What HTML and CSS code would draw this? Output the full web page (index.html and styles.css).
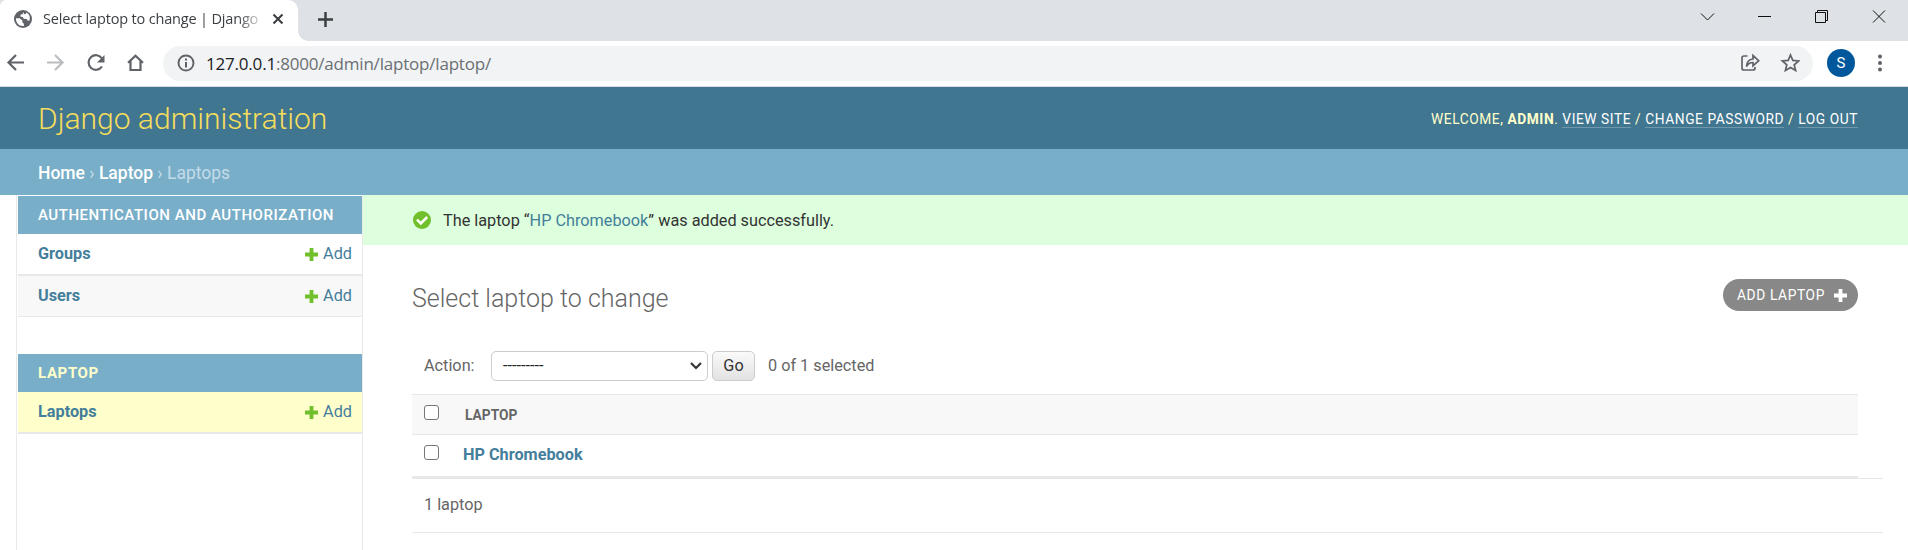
FILE: index.html
```
<!DOCTYPE html>
<html lang="en">
<head>
<meta charset="utf-8">
<title>Select laptop to change | Django site admin</title>
<link rel="stylesheet" href="styles.css">
</head>
<body>
<div class="tabstrip">
  <div class="tab">
    <svg class="globe" width="18" height="18" viewBox="0 0 18 18"><circle cx="9" cy="9" r="9" fill="#5f6368"/><path d="M2 8.200h3.700l2.700 2.200v2l1.500 1.300v2.200C5.200 16.500 1.600 12.800 2 8.200zM9 2.100l-.2 2.100-2.300.3v2.200l2.400.2.600 1.900 3.100.1 1 1.700 1.700.2c1.600-3.800-.3-7.300-3.300-8.300l-.2 1.500-1.400.3z" fill="#fff"/></svg>
    <span class="tab-title">Select laptop to change | Django</span>
    <svg class="tab-close" width="12" height="12" viewBox="0 0 12 12"><path d="M1.500 1.500l9 9m0-9l-9 9" stroke="#3c4043" stroke-width="2.100"/></svg>
  </div>
  <svg class="new-tab" width="24" height="41" viewBox="0 0 24 41"><path d="M12.500 12v15M5 19.500h15" stroke="#3c4043" stroke-width="2.500"/></svg>
  <svg class="window-buttons" width="208" height="41" viewBox="0 0 208 41" fill="none" stroke="#111" stroke-width="1"><path d="M1 13.500l6.500 6.500 6.500-6.500M58 16.500h13M115.500 12.500h10v10h-10zM117.500 12.500v-2h10v10h-2M173 10.500l12 12m0-12l-12 12"/></svg>
</div>
<div class="toolbar">
  <svg class="nav-icons" width="163" height="44" viewBox="0 0 163 44" fill="none" stroke="#5f6368" stroke-width="2.200">
    <path d="M24 21.500H9M16 14l-7.500 7.500L16 29"/>
    <path d="M47 21.500h15M55 14l7.500 7.500L55 29" stroke="#babcbe"/>
    <path d="M102 17.500A7.300 7.300 0 1 0 102 25.500"/><path d="M104.500 14v7.500H97z" fill="#5f6368" stroke="none"/>
    <path d="M128 21.800l7.500-7 7.500 7M130.500 20v9h10v-9"/>
  </svg>
  <div class="omnibox">
    <svg width="18" height="18" viewBox="0 0 18 18" fill="none" stroke="#5f6368"><circle cx="9" cy="9" r="7.500" stroke-width="1.900"/><path d="M9 4.500v2M9 8v5.500" stroke-width="2"/></svg>
    <span class="url"><span class="host">127.0.0.1</span>:8000/admin/laptop/laptop/</span>
    <svg class="page-actions" width="60" height="34" viewBox="0 0 60 34" fill="none" stroke="#5f6368" stroke-width="1.700"><path d="M7.500 10H4q-2 0-2 2v10q0 2 2 2h9q2 0 2-2v-1M6.500 20.500c.4-5 2.500-7.300 6.500-7.500V9.500l5.700 5.200-5.700 5.200v-3.400c-3 0-5 1-6.500 4z"/><path d="M50.500 9l2.300 5.400 5.900.5-4.500 3.900 1.400 5.700-5.100-3-5.100 3 1.400-5.700-4.500-3.900 5.900-.5z"/></svg>
  </div>
  <div class="avatar">S</div>
  <svg width="6" height="20" viewBox="0 0 6 20" fill="#5f6368"><circle cx="3" cy="3.500" r="2"/><circle cx="3" cy="10" r="2"/><circle cx="3" cy="16.500" r="2"/></svg>
</div>
<header class="header">
  <h1>Django administration</h1>
  <div class="user-tools">Welcome, <strong>admin</strong>. <a>View site</a> / <a>Change password</a> / <a>Log out</a></div>
</header>
<nav class="breadcrumbs"><a>Home</a> › <a>Laptop</a> › Laptops</nav>
<div class="main">
  <aside class="sidebar">
    <section class="app">
      <h2>Authentication and Authorization</h2>
      <div class="model"><b>Groups</b><a class="add"><svg width="13" height="13" viewBox="0 0 13 13"><path d="M6.500 0v13M0 6.500h13" stroke="#70bf2b" stroke-width="3.800"/></svg>Add</a></div>
      <div class="model alt"><b>Users</b><a class="add"><svg width="13" height="13" viewBox="0 0 13 13"><path d="M6.500 0v13M0 6.500h13" stroke="#70bf2b" stroke-width="3.800"/></svg>Add</a></div>
    </section>
    <section class="app current">
      <h2>Laptop</h2>
      <div class="model selected"><b>Laptops</b><a class="add"><svg width="13" height="13" viewBox="0 0 13 13"><path d="M6.500 0v13M0 6.500h13" stroke="#70bf2b" stroke-width="3.800"/></svg>Add</a></div>
    </section>
  </aside>
  <main class="content">
    <div class="message">
      <svg width="18" height="18" viewBox="0 0 18 18"><circle cx="9" cy="9" r="9" fill="#70bf2b"/><path d="M4 8.600l3.800 3.800 6.400-6.400" fill="none" stroke="#fff" stroke-width="2.600"/></svg>
      <span>The laptop “<a>HP Chromebook</a>” was added successfully.</span>
    </div>
    <div class="title-row">
      <h3>Select laptop to change</h3>
      <a class="add-button">Add laptop<svg width="13" height="13" viewBox="0 0 13 13"><path d="M6.500 0v13M0 6.500h13" stroke="#fff" stroke-width="3.800"/></svg></a>
    </div>
    <div class="actions">
      <span class="action-label">Action:</span>
      <div class="select"><span>---------</span><svg width="12" height="8" viewBox="0 0 12 8"><path d="M1 1l5 5 5-5" fill="none" stroke="#333" stroke-width="2.200"/></svg></div>
      <button class="go">Go</button>
      <span class="counter">0 of 1 selected</span>
    </div>
    <div class="results">
      <div class="row head"><i class="check"></i><span>Laptop</span></div>
      <div class="row"><i class="check"></i><b>HP Chromebook</b></div>
    </div>
    <div class="paginator">1 laptop</div>
  </main>
</div>
</body>
</html>
```
FILE: styles.css
```
* { box-sizing: border-box; }
body { margin: 0; height: 550px; overflow: hidden; background: #fff; color: #333; font: 16.25px/20px Roboto, sans-serif; }
svg { display: block; flex: none; }
h1, h2, h3 { margin: 0; font-weight: 400; }

.tabstrip { display: flex; height: 41px; background: #dee1e6; }
.tab { position: relative; display: flex; align-items: center; width: 298px; padding: 0 0 3px 14px; background: #fff; border-radius: 6px 10px 0 0; }
.tab-title { width: 217px; margin-left: 11px; font: 14.5px/20px "Open Sans", sans-serif; letter-spacing: -0.17px; white-space: nowrap; color: #3c4043; -webkit-mask-image: linear-gradient(90deg, #000 195px, transparent 222px); }
.tab-close { margin-left: 12px; }
.tab::after { content: ""; position: absolute; left: 298px; bottom: 0; width: 10px; height: 10px; background: radial-gradient(circle at 100% 0, #dee1e6 9.500px, #fff 10px); }
.new-tab { margin-left: 15px; }
.window-buttons { margin-left: auto; }

.toolbar { display: flex; align-items: center; height: 46px; padding-bottom: 1px; border-bottom: 1px solid #dadce0; }
.omnibox { display: flex; align-items: center; width: 1650px; height: 35px; padding: 0 13px 0 14px; background: #f1f3f4; border-radius: 18px; }
.url { margin-left: 11px; padding-top: 1px; font: 17px/24px "Open Sans", sans-serif; letter-spacing: -0.2px; color: #6b6f73; }
.host { color: #202124; }
.page-actions { margin-left: auto; }
.avatar { width: 28px; height: 28px; margin: 0 22px 0 14px; border-radius: 50%; background: #01579b; color: #fff; text-align: center; font-size: 15px; line-height: 28px; }

.header { display: flex; align-items: center; justify-content: space-between; height: 62px; padding: 0 50px 0 38px; background: #417690; color: #ffc; }
.header h1 { padding-top: 1px; font-size: 30px; font-weight: 300; line-height: 36px; color: #f5dd5d; }
.user-tools { padding-top: 1px; font-size: 13.75px; letter-spacing: .56px; text-transform: uppercase; line-height: 16px; }
.user-tools a { color: #fff; border-bottom: 1px solid rgba(255,255,255,.25); }
.breadcrumbs { height: 46px; padding-left: 38px; background: #79aec8; color: #c4dce8; font-size: 17.5px; line-height: 48px; }
.breadcrumbs a { color: #fff; font-weight: 500; }

.main { display: flex; height: 355px; }
.sidebar { width: 347px; margin-left: 16px; padding: 1px 0 0 1px; border: solid #eaeaea; border-width: 0 1px; }
.app { margin-bottom: 37px; }
.app h2 { height: 38px; padding-left: 20px; background: #79aec8; color: #fff; font-size: 15px; font-weight: 500; letter-spacing: .54px; line-height: 38px; text-transform: uppercase; }
.model { display: flex; justify-content: space-between; height: 42px; padding: 10px 10px 0 20px; border-bottom: 2px solid #e8e8e8; color: #447e9b; }
.model b, .row b { font-weight: 700; color: #447e9b; }
.alt { height: 41px; background: #f8f8f8; border-bottom-width: 1px; }
.add { display: flex; align-items: center; height: 20px; gap: 5px; }
.current h2 { color: #ffc; font-weight: 700; letter-spacing: .625px; }
.selected { background: #ffc; }

.content { flex: 1; }
.message { display: flex; align-items: center; height: 50px; padding-left: 50px; gap: 12px; background: #dfd; }
.message span { padding-top: 2px; }
.message a { color: #447e9b; }
.title-row { display: flex; justify-content: space-between; padding: 34px 50px 0 49px; height: 106px; }
.title-row h3 { padding-top: 4px; font-size: 25px; font-weight: 300; line-height: 32px; color: #666; }
.add-button { display: flex; align-items: center; justify-content: space-between; width: 135px; height: 32px; padding: 0 11px 0 14px; border-radius: 16px; background: #888; color: #fff; font-size: 13.75px; letter-spacing: .625px; text-transform: uppercase; }
.actions { display: flex; align-items: center; height: 30px; padding-left: 61px; color: #666; }
.action-label { width: 67px; }
.select { display: flex; align-items: center; justify-content: space-between; width: 217px; height: 30px; padding: 0 5px 0 11px; border: 1px solid #ccc; border-radius: 5px; color: #222; }
.go { width: 43px; height: 30px; margin: 0 13px 0 4px; padding: 0; border: 1px solid #ccc; border-radius: 5px; background: linear-gradient(#fafafa, #e2e2e2); color: #333; font: 16.25px/20px Roboto, sans-serif; }
.results { margin: 13px 50px 0 49px; border-bottom: 2px solid #e8e8e8; }
.row { display: flex; height: 41px; padding: 10px 0 0 12px; gap: 24px; }
.head { gap: 26px; background: #f8f8f8; border: solid #e8e8e8; border-width: 1px 0; color: #666; font-size: 13.75px; font-weight: 700; text-transform: uppercase; }
.check { width: 15px; height: 15px; border: 1px solid #767676; border-radius: 3px; background: #fff; }
.paginator { height: 55px; margin: 0 25px 0 49px; padding: 16px 12px 0; border: solid #e8e8e8; border-width: 1px 0; color: #666; }
```
